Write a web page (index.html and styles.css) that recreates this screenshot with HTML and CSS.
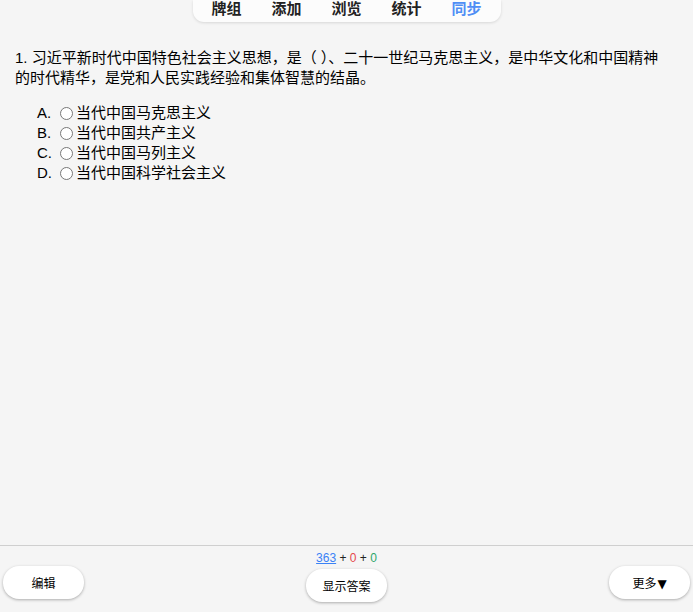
FILE: index.html
```html
<!DOCTYPE html>
<html lang="zh">
<head>
  <meta charset="UTF-8" />
  <title>Anki</title>
  <link rel="stylesheet" href="styles.css">
</head>
<body>

  <!-- Top toolbar -->
  <div class="toolbar">
    <nav class="toolbar-pill">
      <a class="tab">牌组</a>
      <a class="tab">添加</a>
      <a class="tab">浏览</a>
      <a class="tab">统计</a>
      <a class="tab sync">同步</a>
    </nav>
  </div>

  <!-- Card -->
  <main class="card">
    <div class="question">1. 习近平新时代中国特色社会主义思想，是（ ）、二十一世纪马克思主义，是中华文化和中国精神的时代精华，是党和人民实践经验和集体智慧的结晶。</div>
    <ul class="options">
      <li><span class="letter">A.</span><span class="radio"></span>当代中国马克思主义</li>
      <li><span class="letter">B.</span><span class="radio"></span>当代中国共产主义</li>
      <li><span class="letter">C.</span><span class="radio"></span>当代中国马列主义</li>
      <li><span class="letter">D.</span><span class="radio"></span>当代中国科学社会主义</li>
    </ul>
  </main>

  <!-- Bottom bar -->
  <footer class="bottom-bar">
    <div class="side"><button class="btn">编辑</button></div>
    <div class="middle">
      <div class="counts"><a class="new">363</a> + <span class="learn">0</span> + <span class="review">0</span></div>
      <button class="btn">显示答案</button>
    </div>
    <div class="side right"><button class="btn">更多<span class="caret">▼</span></button></div>
  </footer>

</body>
</html>
```

FILE: styles.css
```css
html, body {
  height: 100%;
}

body {
  margin: 0;
  background: #f5f5f5;
  color: #000;
  font-family: "Liberation Sans", "Noto Sans CJK SC", sans-serif;
  display: flex;
  flex-direction: column;
  overflow: hidden;
}

.toolbar {
  display: flex;
  justify-content: center;
}

.toolbar-pill {
  display: flex;
  background: #fcfcfc;
  padding: 0 4px;
  height: 22px;
  border-radius: 0 0 11px 11px;
  box-shadow: 0 1px 3px rgba(0, 0, 0, 0.12);
}

.tab {
  width: 60px;
  text-align: center;
  font-size: 15px;
  font-weight: bold;
  line-height: 17px;
  color: #222;
}

.tab.sync {
  color: #4f8ef5;
}

.card {
  flex: 1;
  padding: 26px 25px 0 15px;
  font-size: 15px;
  line-height: 20px;
}

.options {
  list-style: none;
  margin: 15px 0 0;
  padding: 0 0 0 22px;
}

.options li {
  display: flex;
  align-items: center;
  height: 20px;
}

.letter {
  width: 23px;
}

.radio {
  width: 11px;
  height: 11px;
  border: 1px solid #777;
  border-radius: 50%;
  background: #fff;
  margin-right: 3px;
}

.bottom-bar {
  height: 66px;
  border-top: 1px solid #cfcfcf;
  display: flex;
  justify-content: space-between;
  font-size: 12px;
}

.side {
  width: 100px;
  padding: 20px 0 0 3px;
}

.side.right {
  display: flex;
  justify-content: flex-end;
  padding: 20px 3px 0 0;
}

.middle {
  display: flex;
  flex-direction: column;
  align-items: center;
  padding-top: 4px;
}

.counts {
  font-size: 12px;
  line-height: 16px;
  color: #222;
}

.new {
  color: #3b82f6;
  text-decoration: underline;
}

.learn {
  color: #e5484d;
}

.review {
  color: #2da66a;
}

.btn {
  width: 81px;
  height: 33px;
  margin-top: 3px;
  border: none;
  border-radius: 16px;
  background: #fff;
  box-shadow: 0 1px 3px rgba(0, 0, 0, 0.3);
  font-family: "Liberation Sans", "Noto Sans CJK SC", sans-serif;
  font-size: 12px;
  color: #000;
}

.caret {
  font-family: "DejaVu Sans", sans-serif;
  font-size: 12px;
  margin-left: 1px;
}

.side .btn {
  margin-top: 0;
}
```
